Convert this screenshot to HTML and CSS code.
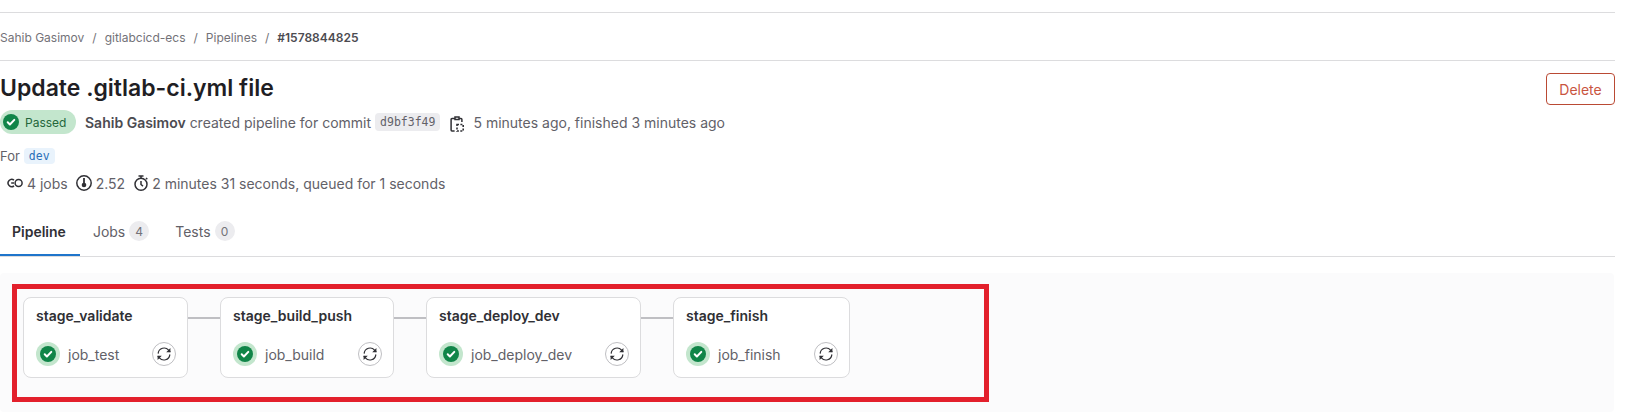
FILE: index.html
```html
<!DOCTYPE html>
<html lang="en">
<head>
    <meta charset="UTF-8">
    <meta name="viewport" content="width=device-width, initial-scale=1.0">
    <title>Update .gitlab-ci.yml file</title>
    <link rel="stylesheet" href="styles.css">
</head>
<body>
    <svg class="icon-defs" width="0" height="0">
        <symbol id="i-check" viewBox="0 0 16 16">
            <circle cx="8" cy="8" r="8" fill="#108548"/>
            <path d="M4.7 8.3l2.2 2.2 4.4-4.6" fill="none" stroke="#fff" stroke-width="2" stroke-linecap="round" stroke-linejoin="round"/>
        </symbol>
        <symbol id="i-retry" viewBox="0 0 16 16">
            <path d="M2.2 7.2A5.9 5.9 0 0 1 12.6 4.2L14 5.6M13.8 8.8A5.9 5.9 0 0 1 3.4 11.8L2 10.4" fill="none" stroke="#303035" stroke-width="1.2" stroke-linecap="round"/>
            <path d="M14.4 2v4.2h-4.2zM1.6 14V9.8h4.2z" fill="#303035"/>
        </symbol>
    </svg>

    <div class="topline"></div>
    <nav class="crumbs">
        <span>Sahib Gasimov</span><i>/</i>
        <span>gitlabcicd-ecs</span><i>/</i>
        <span>Pipelines</span><i>/</i>
        <strong>#1578844825</strong>
    </nav>

    <header class="head">
        <div class="head-main">
            <h1>Update .gitlab-ci.yml file</h1>
            <div class="meta">
                <span class="badge">
                    <svg class="badge-icon"><use href="#i-check"/></svg>
                    Passed
                </span>
                <strong class="author">Sahib Gasimov</strong>
                <span>created pipeline for commit</span>
                <code class="sha">d9bf3f49</code>
                <svg class="clip" viewBox="0 0 14 16">
                    <path d="M5 1h4v2.6H5zM4.5 2.6H2a.9.9 0 0 0-.9.9v10.6c0 .5.4.9.9.9h2.6M9.5 2.6H11c.5 0 .9.4.9.9V6" fill="none" stroke="#303035" stroke-width="1.5"/>
                    <path d="M7 8.5h6.2v6.5H7z" fill="none" stroke="#303035" stroke-width="1.6" stroke-dasharray="2 1.4"/>
                </svg>
                <span class="ago">5 minutes ago, finished 3 minutes ago</span>
            </div>
            <div class="ref-row">For <code class="ref">dev</code></div>
            <div class="stats">
                <svg class="stat-icon" viewBox="0 0 16 16">
                    <path d="M7 5.2A3.6 3.6 0 1 0 7 10.8M4.2 8H7" fill="none" stroke="#303035" stroke-width="1.5"/>
                    <circle cx="11.6" cy="8" r="3.5" fill="none" stroke="#303035" stroke-width="1.5"/>
                </svg>
                <span class="stat">4 jobs</span>
                <svg class="stat-icon" viewBox="0 0 16 16">
                    <circle cx="8" cy="8" r="7.2" fill="none" stroke="#303035" stroke-width="1.5"/>
                    <path d="M8 3v5.5" stroke="#303035" stroke-width="1.8"/>
                    <circle cx="8" cy="10" r="2.3" fill="#303035"/>
                </svg>
                <span class="stat">2.52</span>
                <svg class="stat-icon timer-icon" viewBox="0 0 16 16">
                    <circle cx="8" cy="9.2" r="6" fill="none" stroke="#303035" stroke-width="1.5"/>
                    <path d="M5.5 1h5M8 1v2M8 6v3.5l2 1.6M13 3l1.3 1.3" fill="none" stroke="#303035" stroke-width="1.5"/>
                </svg>
                <span>2 minutes 31 seconds, queued for 1 seconds</span>
            </div>
        </div>
        <button class="delete">Delete</button>
    </header>

    <div class="tabs">
        <a class="tab tab-active">Pipeline</a>
        <a class="tab">Jobs <span class="count">4</span></a>
        <a class="tab">Tests <span class="count">0</span></a>
    </div>

    <section class="graph">
        <div class="outline">
            <div class="stage stage-validate">
                <h3>stage_validate</h3>
                <div class="job">
                    <span class="ring"><svg><use href="#i-check"/></svg></span>
                    <span class="job-name">job_test</span>
                    <span class="retry"><svg><use href="#i-retry"/></svg></span>
                </div>
            </div>
            <div class="link"></div>
            <div class="stage stage-build">
                <h3>stage_build_push</h3>
                <div class="job">
                    <span class="ring"><svg><use href="#i-check"/></svg></span>
                    <span class="job-name">job_build</span>
                    <span class="retry"><svg><use href="#i-retry"/></svg></span>
                </div>
            </div>
            <div class="link"></div>
            <div class="stage stage-deploy">
                <h3>stage_deploy_dev</h3>
                <div class="job">
                    <span class="ring"><svg><use href="#i-check"/></svg></span>
                    <span class="job-name">job_deploy_dev</span>
                    <span class="retry"><svg><use href="#i-retry"/></svg></span>
                </div>
            </div>
            <div class="link"></div>
            <div class="stage stage-finish">
                <h3>stage_finish</h3>
                <div class="job">
                    <span class="ring"><svg><use href="#i-check"/></svg></span>
                    <span class="job-name">job_finish</span>
                    <span class="retry"><svg><use href="#i-retry"/></svg></span>
                </div>
            </div>
        </div>
    </section>
</body>
</html>
```

FILE: styles.css
```css
html, body {
    height: 412px;
    overflow: hidden;
}
body {
    margin: 0;
    width: 1615px;
    background: #fff;
    font-family: Inter, "Liberation Sans", sans-serif;
    font-size: 14px;
    color: #626168;
}
.icon-defs {
    display: block;
}
.topline {
    margin-top: 12px;
    height: 1px;
    background: #dcdcde;
}
.crumbs {
    display: flex;
    align-items: center;
    height: 46px;
    padding-top: 1px;
    border-bottom: 1px solid #dcdcde;
    font-size: 12px;
    color: #737278;
}
.crumbs i {
    font-style: normal;
    margin: 0 8px;
}
.crumbs strong {
    font-weight: 600;
    color: #4c4b51;
}
.head {
    display: flex;
    justify-content: space-between;
    align-items: flex-start;
}
h1 {
    margin: 11px 0 0;
    font-size: 23px;
    line-height: 32px;
    font-weight: 600;
    color: #1f1e24;
}
.meta {
    display: flex;
    align-items: center;
    height: 24px;
    margin-top: 6px;
}
.badge {
    display: flex;
    align-items: center;
    width: 76px;
    height: 24px;
    box-sizing: border-box;
    padding-left: 3px;
    border-radius: 12px;
    background: #c3e6cd;
    color: #24663b;
    font-size: 12px;
}
.badge-icon {
    width: 16px;
    height: 16px;
    margin-right: 6px;
}
.author {
    margin-left: 9px;
    margin-right: 4px;
    font-weight: 600;
    color: #4c4b51;
}
.sha {
    margin-left: 4px;
    padding: 2px 5px;
    border-radius: 4px;
    background: #ececef;
    font-family: "DejaVu Sans Mono", "Liberation Mono", monospace;
    font-size: 11.5px;
    color: #626168;
}
.clip {
    width: 14px;
    height: 16px;
    margin: 4px 9px 0 10px;
}
.ref-row {
    display: flex;
    align-items: center;
    gap: 4px;
    height: 20px;
    margin-top: 12px;
    font-size: 13px;
}
.ref {
    padding: 1px 5px;
    border-radius: 4px;
    background: #e9f3fc;
    font-family: "DejaVu Sans Mono", "Liberation Mono", monospace;
    font-size: 11.5px;
    color: #2a6fb8;
}
.stats {
    display: flex;
    align-items: center;
    height: 20px;
    margin-top: 7px;
    padding-left: 7px;
}
.stat-icon {
    width: 16px;
    height: 16px;
    margin-right: 4px;
}
.timer-icon {
    margin-right: 3px;
}
.stat {
    margin-right: 8px;
}
.delete {
    margin-top: 12px;
    width: 69px;
    height: 32px;
    padding: 0;
    border: 1px solid #ba4a34;
    border-radius: 4px;
    background: #fff;
    font-family: inherit;
    font-size: 14px;
    color: #c9553f;
}
.tabs {
    display: flex;
    margin-top: 13px;
    height: 50px;
    border-bottom: 1px solid #dcdcde;
}
.tab {
    display: flex;
    align-items: center;
    gap: 4px;
    height: 50px;
    box-sizing: border-box;
    padding: 0 12px;
    margin-right: 2px;
    color: #626168;
}
.tab-active {
    padding-right: 14px;
    margin-right: 1px;
    font-weight: 600;
    color: #303035;
    box-shadow: inset 0 -2px 0 #1f75cb;
}
.count {
    display: flex;
    align-items: center;
    justify-content: center;
    width: 20px;
    height: 20px;
    border-radius: 50%;
    background: #ececef;
    font-size: 12px;
    color: #737278;
}
.graph {
    margin-top: 16px;
    width: 1614px;
    height: 139px;
    padding: 11px 0 0 12px;
    box-sizing: border-box;
    border-radius: 4px;
    background: #fbfbfc;
}
.outline {
    display: flex;
    align-items: flex-start;
    width: 977px;
    height: 118px;
    box-sizing: border-box;
    padding: 8px 0 0 6px;
    border: 5px solid #e3202c;
}
.stage {
    height: 81px;
    box-sizing: border-box;
    padding: 9px 11px 0 12px;
    border: 1px solid #dcdcde;
    border-radius: 8px;
    background: #fff;
}
.stage-validate {
    width: 165px;
}
.stage-build {
    width: 174px;
}
.stage-deploy {
    width: 215px;
}
.stage-finish {
    width: 177px;
}
h3 {
    margin: 0;
    font-size: 14px;
    line-height: 18px;
    font-weight: 600;
    color: #303035;
}
.link {
    width: 32px;
    height: 2px;
    margin-top: 20px;
    background: #bfbfc3;
}
.job {
    display: flex;
    align-items: center;
    margin-top: 17px;
}
.ring {
    display: flex;
    align-items: center;
    justify-content: center;
    width: 24px;
    height: 24px;
    border-radius: 50%;
    background: #c3e6cd;
}
.ring svg {
    width: 16px;
    height: 16px;
}
.job-name {
    flex: 1;
    margin-left: 8px;
    font-size: 14px;
    color: #626168;
}
.retry {
    display: flex;
    align-items: center;
    justify-content: center;
    width: 24px;
    height: 24px;
    box-sizing: border-box;
    border: 1px solid #bfbfc3;
    border-radius: 50%;
    background: #fff;
}
.retry svg {
    width: 16px;
    height: 16px;
}
```
